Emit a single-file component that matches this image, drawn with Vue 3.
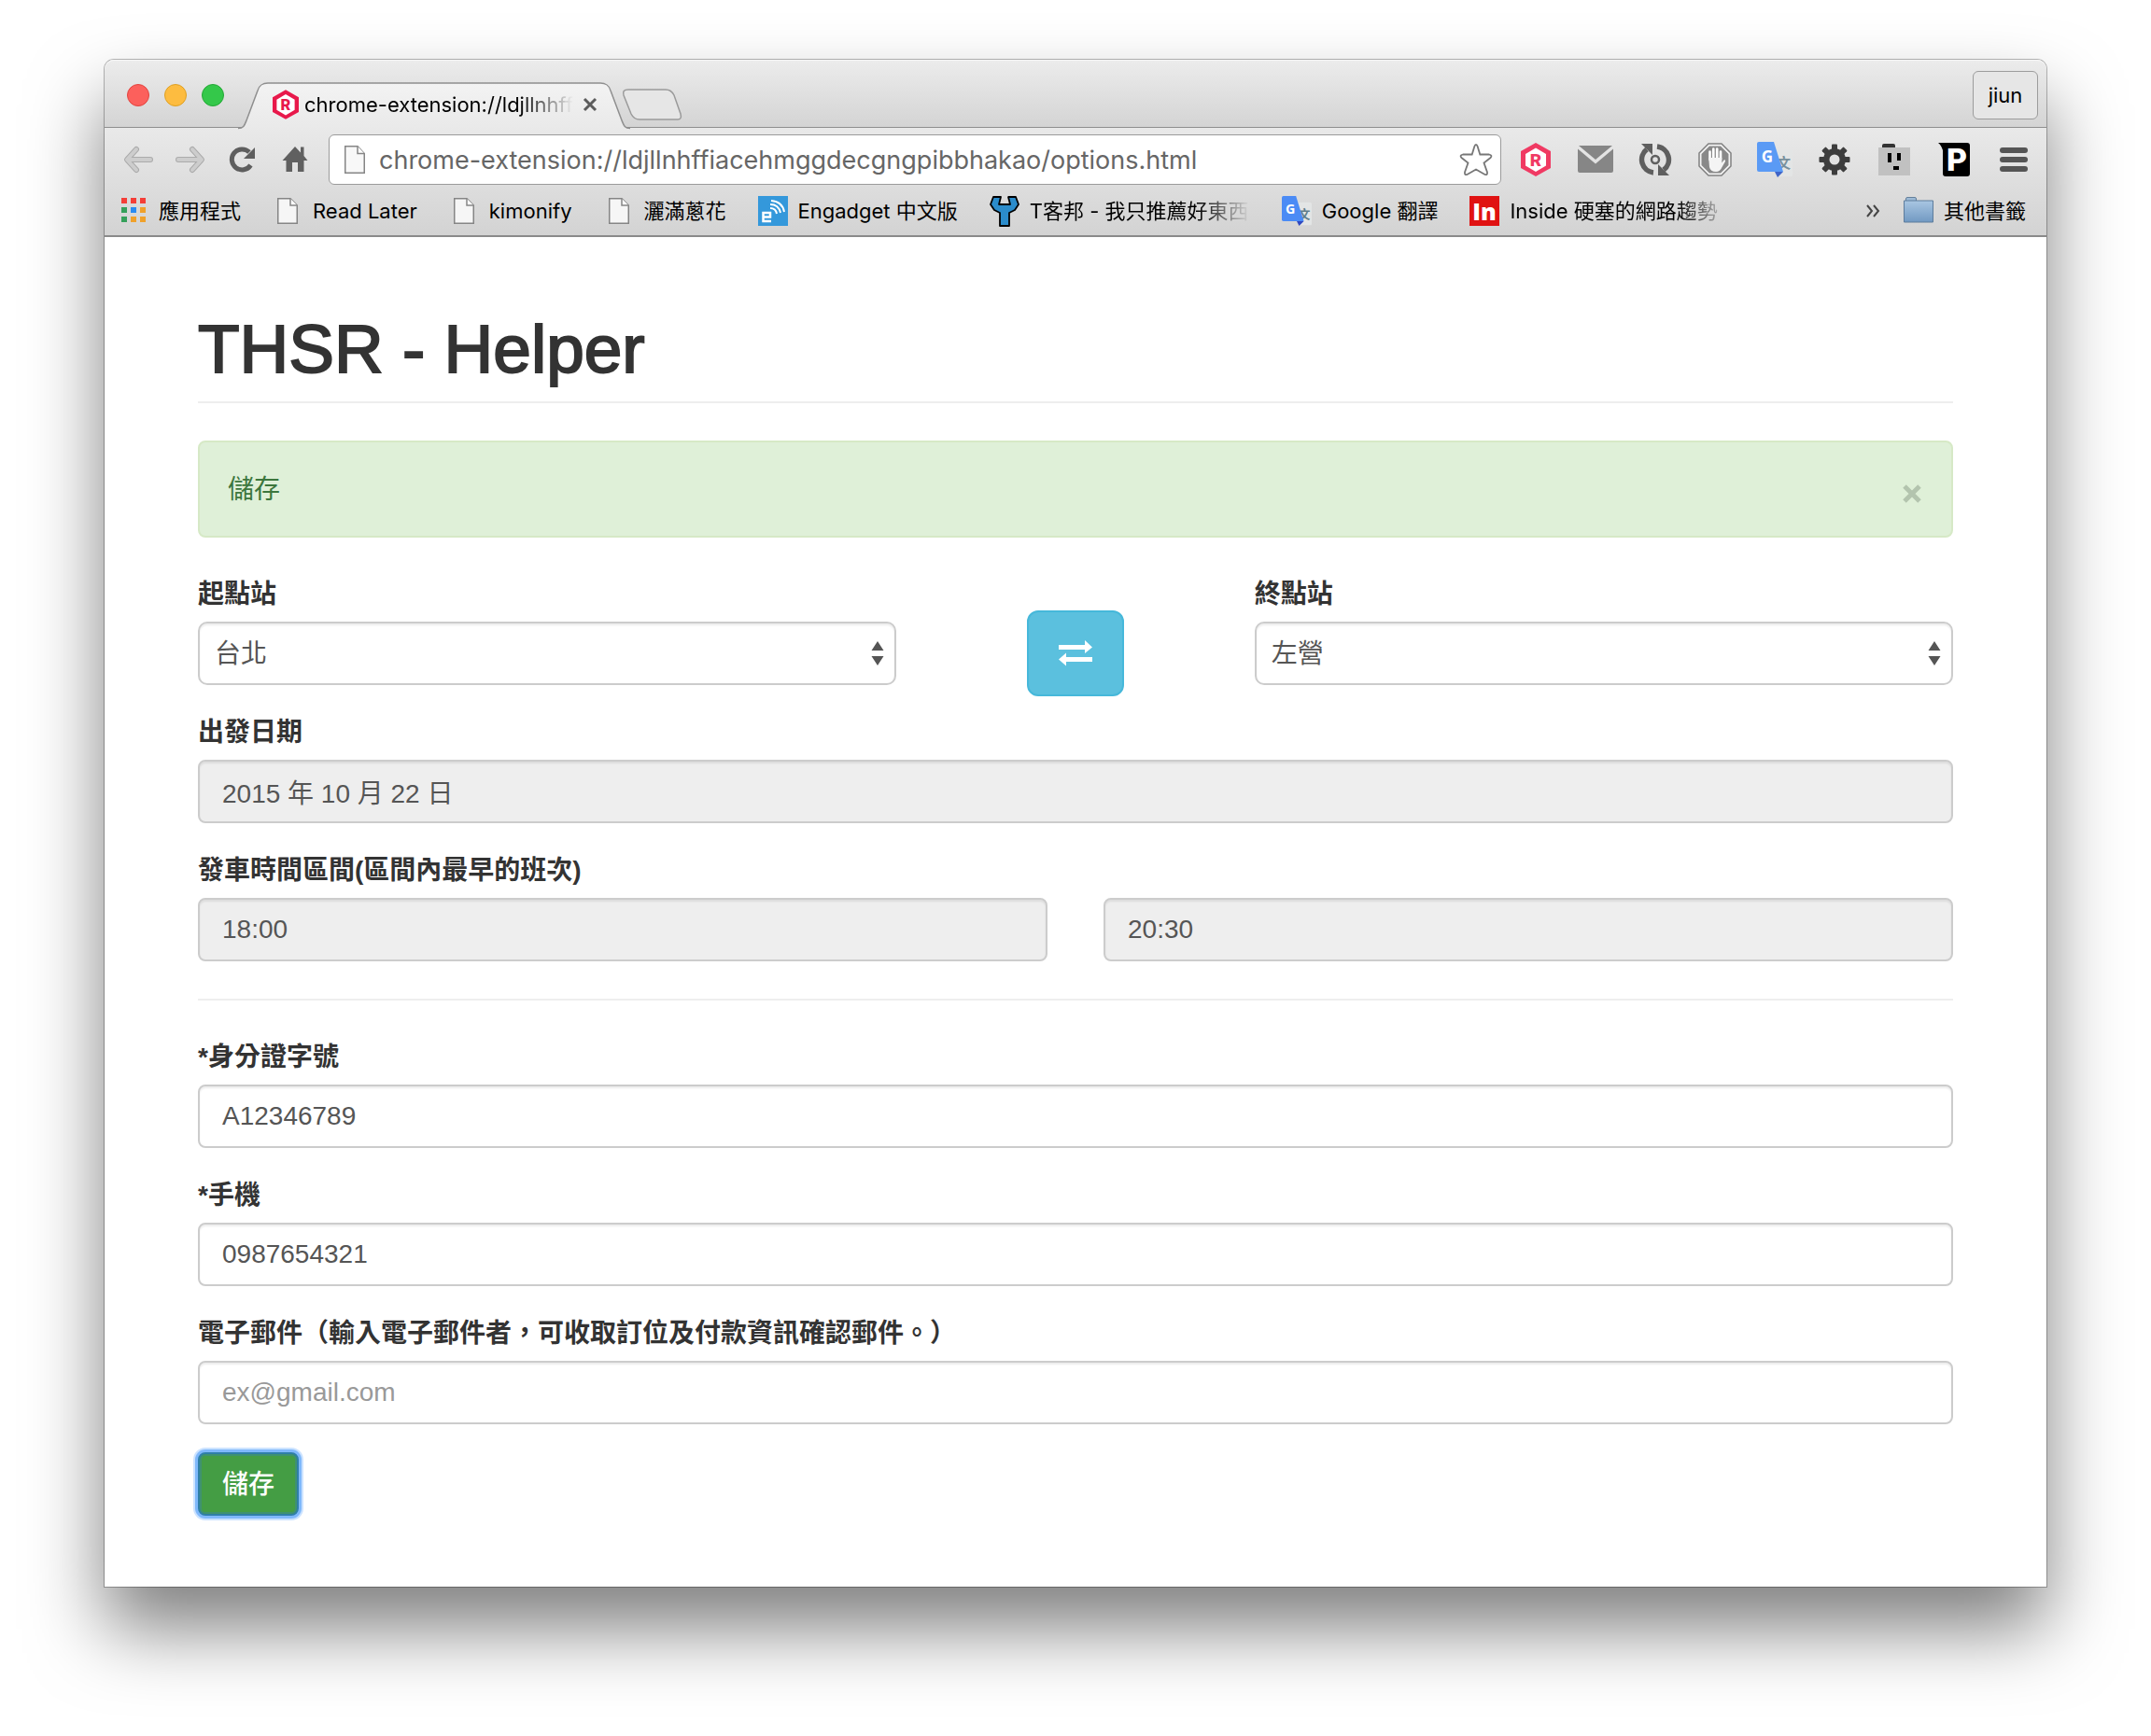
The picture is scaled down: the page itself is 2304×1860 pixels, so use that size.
<script setup>
import { ref } from 'vue'

const url = ref('chrome-extension://ldjllnhffiacehmggdecgngpibbhakao/options.html')
const origin = ref('台北')
const destination = ref('左營')
const date = ref('2015 年 10 月 22 日')
const timeFrom = ref('18:00')
const timeTo = ref('20:30')
const idNumber = ref('A12346789')
const phone = ref('0987654321')
const email = ref('')
const saved = ref(true)

const stations = ['台北', '板橋', '桃園', '新竹', '台中', '嘉義', '台南', '左營']

const bookmarks = [
  { label: 'Read Later', icon: 'page' },
  { label: 'kimonify', icon: 'page' },
  { label: '灑滿蔥花', icon: 'page' },
  { label: 'Engadget 中文版', icon: 'engadget' },
  { label: 'T客邦 - 我只推薦好東西', icon: 'techbang', clip: true },
  { label: 'Google 翻譯', icon: 'translate' },
  { label: 'Inside 硬塞的網路趨勢', icon: 'inside', clip: true },
]

function swap() {
  const from = origin.value
  origin.value = destination.value
  destination.value = from
}
</script>

<template>
  <div class="desktop">
    <div class="window">
      <header class="tabstrip">
        <div class="lights">
          <button class="light red" aria-label="Close"></button>
          <button class="light yellow" aria-label="Minimize"></button>
          <button class="light green" aria-label="Zoom"></button>
        </div>
        <div class="tab">
          <svg class="tab-shape" width="420" height="51" viewBox="0 0 420 51">
            <defs>
              <linearGradient id="tabFill" x1="0" y1="0" x2="0" y2="1">
                <stop offset="0" stop-color="#f3f3f3" />
                <stop offset="1" stop-color="#e9e9e9" />
              </linearGradient>
            </defs>
            <path d="M0 51V49.500C6 49.500 7 46 9 41L21 9C23 3 26 1 32 1H388C394 1 397 3 399 9L411 41C413 46 414 49.500 420 49.500V51Z" fill="url(#tabFill)" />
            <path d="M0 49.500C6 49.500 7 46 9 41L21 9C23 3 26 1 32 1H388C394 1 397 3 399 9L411 41C413 46 414 49.500 420 49.500" fill="none" stroke="#8f8f8f" stroke-width="1.500" />
          </svg>
          <svg class="favicon" width="28" height="32" viewBox="0 0 32 36">
            <path d="M16 0L32 9V27L16 36L0 27V9Z" fill="#e8194b" />
            <path d="M16 5.500L27 12V24.500L16 31L5 24.500V12Z" fill="#fff" />
            <text x="16" y="25" text-anchor="middle" font-family="Roboto, sans-serif" font-weight="900" font-size="19" fill="#e8194b">R</text>
          </svg>
          <span class="tab-title">chrome-extension://ldjllnhff</span>
          <button class="tab-close" aria-label="Close tab">
            <svg width="16" height="16" viewBox="0 0 16 16"><path d="M2 2L14 14M14 2L2 14" stroke="#5c5c5c" stroke-width="3" /></svg>
          </button>
        </div>
        <button class="new-tab" aria-label="New tab">
          <svg width="66" height="34" viewBox="0 0 66 34">
            <path d="M8 1H48C53 1 55 3 57 7L64 27C65 31 64 33 61 33H20C15 33 13 31 11 27L3 7C2 3 3 1 8 1Z" fill="#e6e6e6" stroke="#9a9a9a" stroke-width="1.500" />
          </svg>
        </button>
        <button class="profile">jiun</button>
      </header>

      <div class="chrome">
        <div class="toolbar">
          <button class="nav" aria-label="Back">
            <svg width="32" height="30" viewBox="0 0 32 30"><path d="M29 15H5M14 4L4 15L14 26" fill="none" stroke="#ababab" stroke-width="6" stroke-linecap="round" stroke-linejoin="round" /><path d="M29 15H5M14 4L4 15L14 26" fill="none" stroke="#cdcdcd" stroke-width="4" stroke-linecap="round" stroke-linejoin="round" /></svg>
          </button>
          <button class="nav" aria-label="Forward">
            <svg width="32" height="30" viewBox="0 0 32 30"><path d="M3 15H27M18 4L28 15L18 26" fill="none" stroke="#ababab" stroke-width="6" stroke-linecap="round" stroke-linejoin="round" /><path d="M3 15H27M18 4L28 15L18 26" fill="none" stroke="#cdcdcd" stroke-width="4" stroke-linecap="round" stroke-linejoin="round" /></svg>
          </button>
          <button class="nav" aria-label="Reload">
            <svg width="30" height="30" viewBox="0 0 30 30"><path d="M23.500 21A11 11 0 1 1 22 7" fill="none" stroke="#5e5e5e" stroke-width="5" /><path d="M28 2V14H16Z" fill="#5e5e5e" /></svg>
          </button>
          <button class="nav" aria-label="Home">
            <svg width="28" height="30" viewBox="0 0 28 30"><path d="M14 1L20 7.500V1.500H23.500V11L27.500 16H23.500V28H17V18H11V28H4.500V16H.5Z" fill="#606060" /></svg>
          </button>
          <div class="omnibox">
            <svg width="22" height="30" viewBox="0 0 22 30"><path d="M.75.75H14L21.250 8.500V29.250H.75Z" fill="#f8f8f8" stroke="#858585" stroke-width="1.500" /><path d="M14 .75V8.500H21.250" fill="#fff" stroke="#858585" stroke-width="1.500" /></svg>
            <input v-model="url" class="url" type="text" aria-label="Address" spellcheck="false" />
            <button class="star" aria-label="Bookmark this page">
              <svg width="36" height="36" viewBox="0 0 36 36"><path d="M18 2Q19 2 19.700 4L22.300 12.500H32Q36 13.500 33.500 16L26.500 21.500L30 31.500Q30.500 35 27.500 34L18 28.500L8.500 34Q5.500 35 6 31.500L9.500 21.500L2.500 16Q0 13.500 4 12.500H13.700L16.300 4Q17 2 18 2Z" fill="#fff" stroke="#777" stroke-width="1.800" /></svg>
            </button>
          </div>
          <div class="extensions">
            <button class="ext" aria-label="THSR Helper">
              <svg width="32" height="36" viewBox="0 0 32 36"><path d="M16 0L32 9V27L16 36L0 27V9Z" fill="#f03a63" /><path d="M16 5.500L27 12V24.500L16 31L5 24.500V12Z" fill="#fff" /><text x="16" y="25" text-anchor="middle" font-family="Roboto, sans-serif" font-weight="900" font-size="19" fill="#f03a63">R</text></svg>
            </button>
            <button class="ext" aria-label="Mail">
              <svg width="38" height="30" viewBox="0 0 38 30"><path d="M1 0H37L19 15Z" fill="#868686" /><path d="M0 3.500L19 19.500L38 3.500V27Q38 29 36 29H2Q0 29 0 27Z" fill="#868686" /></svg>
            </button>
            <button class="ext" aria-label="Sync">
              <svg width="36" height="36" viewBox="0 0 36 36"><path d="M9 7A14 14 0 0 0 16 32M27 29A14 14 0 0 0 20 4" fill="none" stroke="#5f5f5f" stroke-width="5.500" /><path d="M3 1H15V13Z" fill="#5f5f5f" /><path d="M33 35H21V23Z" fill="#5f5f5f" /><circle cx="18" cy="18" r="4" fill="none" stroke="#5f5f5f" stroke-width="2.500" /></svg>
            </button>
            <button class="ext" aria-label="Content blocker">
              <svg width="36" height="36" viewBox="0 0 36 36"><path d="M11 1H25L35 11V25L25 35H11L1 25V11Z" fill="#f4f4f4" stroke="#808080" stroke-width="1.500" /><path d="M12 3.500H24L32.500 12V24L24 32.500H12L3.500 24V12Z" fill="#898989" /><path d="M12.500 18V9.500M16.300 17V6.500M20.200 17V6.500M24 18V9.500" stroke="#fff" stroke-width="2.600" stroke-linecap="round" /><path d="M11.200 16H25.300V21.500L27.500 18.500Q29.500 17.500 29 20L25.500 26Q23.500 31 19 31Q13 31 12 26Z" fill="#f4f4f4" /></svg>
            </button>
            <button class="ext" aria-label="Translate">
              <svg width="38" height="38" viewBox="0 0 38 38"><path d="M16 8H36Q38 8 38 10V36Q38 37 36 37H22Z" fill="#e3e5e5" /><text x="21" y="28" font-family="Noto Sans CJK TC, sans-serif" font-weight="700" font-size="15" fill="#78909c">文</text><path d="M2 0H18L28 32H2Q0 32 0 30V2Q0 0 2 0Z" fill="#5a9af5" /><path d="M19 32H28L22 38Z" fill="#3f64c8" /><text x="11" y="22" text-anchor="middle" font-family="Open Sans, sans-serif" font-weight="700" font-size="17" fill="#fff">G</text></svg>
            </button>
            <button class="ext" aria-label="Settings">
              <svg width="34" height="34" viewBox="-17 -17 34 34"><g fill="#3d3d3d"><rect v-for="n in 4" :key="n" x="-3" y="-16.500" width="6" height="33" rx="1" :transform="`rotate(${n * 45})`" /><circle r="12" /></g><circle r="5.500" fill="#e2e2e2" /></svg>
            </button>
            <button class="ext" aria-label="Postbox">
              <svg width="34" height="34" viewBox="0 0 34 34"><path d="M4 4V2Q4 0 6 0H16Q18 0 18 2V4Z" fill="#333" /><path d="M0 4H34V34H0Z" fill="#c1c1c1" /><path d="M10 10H14V20H10ZM20 10H24V18H20ZM16 24H22V28H16Z" fill="#000" /></svg>
            </button>
            <button class="ext" aria-label="Pushbullet">
              <svg width="34" height="36" viewBox="0 0 34 36"><path d="M0 0H31Q34 0 34 3V33Q34 36 31 36H8Q5 36 5 33V8Q3 2 0 0Z" fill="#000" /><text x="20" y="30" text-anchor="middle" font-family="Roboto, sans-serif" font-weight="900" font-size="34" fill="#fff">P</text></svg>
            </button>
            <button class="ext" aria-label="Menu">
              <svg width="30" height="26" viewBox="0 0 30 26"><path d="M3 3H27M3 13H27M3 23H27" stroke="#555" stroke-width="6" stroke-linecap="round" /></svg>
            </button>
          </div>
        </div>

        <nav class="bookmarks">
          <a class="bookmark" href="#">
            <svg class="bm-icon" viewBox="0 0 32 32">
              <path d="M3 2H9V8H3ZM13 2H19V8H13ZM23 2H29V8H23Z" fill="#f43e37" />
              <path d="M3 12H9V18H3ZM3 22H9V28H3Z" fill="#35a05a" />
              <path d="M13 12H19V18H13Z" fill="#2a8bf2" />
              <path d="M23 12H29V18H23ZM13 22H19V28H13ZM23 22H29V28H23Z" fill="#f0a12a" />
            </svg>
            <span>應用程式</span>
          </a>
          <a v-for="b in bookmarks" :key="b.label" class="bookmark" href="#">
            <svg v-if="b.icon === 'page'" class="bm-icon" viewBox="0 0 32 32"><path d="M5.750 2.750H19L26.250 10V29.250H5.750Z" fill="#f6f6f6" stroke="#858585" stroke-width="1.500" /><path d="M19 2.750V10H26.250" fill="#fff" stroke="#858585" stroke-width="1.500" /></svg>
            <svg v-else-if="b.icon === 'engadget'" class="bm-icon" viewBox="0 0 32 32"><path d="M0 0H32V32H0Z" fill="#3498db" /><path d="M6 22.500H13V18H5.500V27H14" fill="none" stroke="#fff" stroke-width="2.500" /><path d="M13 13Q19 13 20 19M13 9Q22 9 24 18M14 5Q26 6 28 17" fill="none" stroke="#fff" stroke-width="2" /></svg>
            <svg v-else-if="b.icon === 'techbang'" class="bm-icon" viewBox="0 0 32 32"><path d="M4 1H12L10 9H22L20 1H28L31 9L27 15L21 18V32H11V18L5 15L1 9Z" fill="#2b8ccb" stroke="#000" stroke-width="1.800" stroke-linejoin="round" /></svg>
            <svg v-else-if="b.icon === 'translate'" class="bm-icon" viewBox="0 0 38 38"><path d="M16 8H36Q38 8 38 10V36Q38 37 36 37H22Z" fill="#e3e5e5" /><text x="21" y="28" font-family="Noto Sans CJK TC, sans-serif" font-weight="700" font-size="15" fill="#607d8b">文</text><path d="M2 0H18L28 32H2Q0 32 0 30V2Q0 0 2 0Z" fill="#4b8bf5" /><path d="M19 32H28L22 38Z" fill="#3048c0" /><text x="11" y="22" text-anchor="middle" font-family="Open Sans, sans-serif" font-weight="700" font-size="17" fill="#fff">G</text></svg>
            <svg v-else class="bm-icon" viewBox="0 0 32 32"><path d="M0 0H32V32H0Z" fill="#e01212" /><text x="16" y="26" text-anchor="middle" font-family="Open Sans, sans-serif" font-weight="800" font-size="25" fill="#fff">In</text></svg>
            <span :class="{ clip: b.clip }">{{ b.label }}</span>
          </a>
          <button class="overflow" aria-label="More bookmarks">
            <svg width="14" height="14" viewBox="0 0 14 14"><path d="M1 1L6 7L1 13M8 1L13 7L8 13" fill="none" stroke="#444" stroke-width="2" /></svg>
          </button>
          <a class="bookmark" href="#">
            <svg class="bm-icon" viewBox="0 0 32 32">
              <defs>
                <linearGradient id="folder" x1="0" y1="0" x2="0" y2="1">
                  <stop offset="0" stop-color="#a9c6e2" />
                  <stop offset="1" stop-color="#7199c2" />
                </linearGradient>
              </defs>
              <path d="M2.500 5V3Q2.500 1.500 4 1.500H12Q13.500 1.500 13.500 3V5" fill="#9dbad6" stroke="#65809b" />
              <path d="M.5 5H31.500V28H.5Z" fill="url(#folder)" stroke="#5d7c9c" />
            </svg>
            <span>其他書籤</span>
          </a>
        </nav>
      </div>

      <main class="page">
        <h1>THSR - Helper</h1>

        <div v-if="saved" class="alert" role="alert">
          <span>儲存</span>
          <button class="dismiss" aria-label="Close" @click="saved = false">
            <svg width="20" height="20" viewBox="0 0 20 20"><path d="M2 2L18 18M18 2L2 18" stroke="#b3c4ae" stroke-width="5" /></svg>
          </button>
        </div>

        <form @submit.prevent="saved = true">
          <div class="route">
            <div class="field">
              <label for="origin">起點站</label>
              <div class="select">
                <select id="origin" v-model="origin">
                  <option v-for="s in stations" :key="s">{{ s }}</option>
                </select>
                <svg class="arrows" width="14" height="26" viewBox="0 0 14 26"><path d="M7 0L13.500 10H.5ZM7 26L13.500 16H.5Z" fill="#555" /></svg>
              </div>
            </div>
            <button class="swap" type="button" aria-label="Swap stations" @click="swap">
              <svg width="36" height="28" viewBox="0 0 36 28"><path d="M0 5H28V0L36 7.500L28 14V10H0ZM36 18H8V13.500L0 20.500L8 27.500V23H36Z" fill="#fff" /></svg>
            </button>
            <div class="field">
              <label for="destination">終點站</label>
              <div class="select">
                <select id="destination" v-model="destination">
                  <option v-for="s in stations" :key="s">{{ s }}</option>
                </select>
                <svg class="arrows" width="14" height="26" viewBox="0 0 14 26"><path d="M7 0L13.500 10H.5ZM7 26L13.500 16H.5Z" fill="#555" /></svg>
              </div>
            </div>
          </div>

          <div class="field">
            <label for="date">出發日期</label>
            <input id="date" v-model="date" type="text" readonly />
          </div>

          <div class="field">
            <label for="from">發車時間區間(區間內最早的班次)</label>
            <div class="times">
              <input id="from" v-model="timeFrom" type="text" readonly />
              <input v-model="timeTo" type="text" aria-label="最晚發車時間" readonly />
            </div>
          </div>

          <hr />

          <div class="field">
            <label for="id-number">*身分證字號</label>
            <input id="id-number" v-model="idNumber" type="text" />
          </div>
          <div class="field">
            <label for="phone">*手機</label>
            <input id="phone" v-model="phone" type="text" />
          </div>
          <div class="field">
            <label for="email">電子郵件（輸入電子郵件者，可收取訂位及付款資訊確認郵件。）</label>
            <input id="email" v-model="email" type="email" placeholder="ex@gmail.com" />
          </div>

          <button class="save" type="submit">儲存</button>
        </form>
      </main>
    </div>
  </div>
</template>

<style>
body {
  margin: 0;
  background: #fff;
}
</style>

<style scoped>
* {
  box-sizing: border-box;
}

button {
  padding: 0;
  border: 0;
  background: none;
  color: inherit;
  font: inherit;
}

svg {
  display: block;
  flex: none;
  overflow: visible;
}

.desktop {
  padding: 64px 112px 160px;
  overflow: hidden;
}

.window {
  border-radius: 10px 10px 0 0;
  background: #fff;
  box-shadow: 0 0 0 1px rgba(0, 0, 0, 0.28), 0 45px 80px rgba(0, 0, 0, 0.5);
  font-family: Inter, "Noto Sans CJK TC", sans-serif;
  font-size: 22px;
  color: #000;
}

/* Tab strip */
.tabstrip {
  display: flex;
  align-items: flex-end;
  height: 73px;
  padding: 4px 9px 0 24px;
  border-bottom: 1px solid #8f8f8f;
  border-radius: 10px 10px 0 0;
  background: linear-gradient(#ececec, #d4d4d4);
  box-shadow: inset 0 1px 0 #f7f7f7;
}

.lights {
  display: flex;
  gap: 16px;
  align-self: center;
  margin-right: 15px;
}

.light {
  width: 24px;
  height: 24px;
  border: 1px solid;
  border-radius: 50%;
}

.red {
  border-color: #e2443f;
  background: #fc605c;
}

.yellow {
  border-color: #dfa023;
  background: #fdbc40;
}

.green {
  border-color: #24a836;
  background: #34c84a;
}

.tab {
  position: relative;
  display: flex;
  align-items: center;
  width: 420px;
  height: 50px;
  margin-bottom: -2px;
  padding: 0 0 2px 37px;
}

.tab-shape {
  position: absolute;
  top: 0;
  left: 0;
}

.favicon,
.tab-title,
.tab-close {
  position: relative;
}

.tab-title {
  width: 288px;
  margin-left: 6px;
  overflow: hidden;
  white-space: nowrap;
  mask-image: linear-gradient(90deg, #000 80%, transparent);
}

.tab-close {
  margin-left: 10px;
}

.new-tab {
  margin: 0 auto 7px -10px;
}

.profile {
  align-self: center;
  width: 70px;
  height: 52px;
  border: 1px solid #9c9c9c;
  border-radius: 6px;
  background: #e6e6e6;
}

/* Toolbar and bookmarks */
.chrome {
  border-bottom: 2px solid #8a8a8a;
  background: linear-gradient(#e9e9e9, #d3d3d3);
}

.toolbar {
  display: flex;
  align-items: center;
  height: 63px;
  padding: 6px 3px 2px 8px;
}

.nav,
.ext {
  display: flex;
  align-items: center;
  justify-content: center;
  height: 54px;
}

.nav {
  width: 56px;
}

.ext {
  width: 64px;
}

.omnibox {
  display: flex;
  flex: 1;
  align-items: center;
  height: 54px;
  margin: 0 5px 0 8px;
  padding: 0 8px 0 16px;
  border: 1px solid #9b9b9b;
  border-radius: 6px;
  background: #fff;
}

.url {
  flex: 1;
  min-width: 0;
  height: 48px;
  padding: 2px 0 0;
  margin-left: 15px;
  border: 0;
  outline: 0;
  background: none;
  color: #666;
  font: inherit;
  font-size: 27px;
}

.extensions {
  display: flex;
}

.bookmarks {
  display: flex;
  align-items: center;
  gap: 34px;
  height: 52px;
  padding: 0 22px 0 15px;
}

.bookmark {
  display: flex;
  align-items: center;
  gap: 11px;
  color: inherit;
  line-height: 28px;
  text-decoration: none;
  white-space: nowrap;
}

.bm-icon {
  width: 32px;
  height: 32px;
}

.clip {
  width: 236px;
  overflow: hidden;
  mask-image: linear-gradient(90deg, #000 76%, transparent);
}

.overflow {
  margin: 0 -8px 0 auto;
}

/* Options page */
.page {
  padding: 80px 100px 76px;
  font-family: "Liberation Sans", "Noto Sans CJK TC", sans-serif;
  font-size: 28px;
  line-height: 40px;
  color: #333;
}

h1 {
  margin: 0 0 40px;
  padding-bottom: 16px;
  border-bottom: 2px solid #eee;
  font-size: 73px;
  font-weight: 400;
  line-height: 80px;
  -webkit-text-stroke: 2px #333;
}

.alert {
  display: flex;
  align-items: center;
  justify-content: space-between;
  height: 104px;
  margin-bottom: 40px;
  padding: 2px 32px 0 30px;
  border: 2px solid #d6e9c6;
  border-radius: 8px;
  background: #dff0d8;
  color: #3c763d;
}

.dismiss {
  padding-top: 8px;
}

.field {
  display: flex;
  flex-direction: column;
  gap: 8px;
  margin-bottom: 30px;
}

label {
  font-weight: 700;
  line-height: 42px;
}

.field input,
select {
  width: 100%;
  height: 68px;
  padding: 0 24px;
  border: 2px solid #ccc;
  border-radius: 8px;
  background: #fff;
  box-shadow: inset 0 2px 2px rgba(0, 0, 0, 0.075);
  color: #555;
  font: inherit;
}

.field input:read-only {
  background: #eee;
}

.field input::placeholder {
  color: #999;
  opacity: 1;
}

.select {
  position: relative;
}

select {
  padding: 2px 48px 0 16px;
  border-radius: 10px;
  appearance: none;
}

.arrows {
  position: absolute;
  top: 21px;
  right: 13px;
  pointer-events: none;
}

.route {
  display: flex;
  align-items: flex-start;
  justify-content: space-between;
}

.route .field {
  width: calc((100% + 60px) * 5 / 12 - 60px);
}

.swap {
  display: flex;
  align-items: center;
  justify-content: center;
  width: 104px;
  height: 92px;
  margin: 38px 0 -12px;
  border: 2px solid #46b8da;
  border-radius: 12px;
  background: #5bc0de;
}

.times {
  display: grid;
  grid-template-columns: 1fr 1fr;
  gap: 60px;
}

hr {
  margin: 40px 0;
  border: 0;
  border-top: 2px solid #eee;
}

.save {
  display: block;
  height: 68px;
  padding: 2px 24px 0;
  border: 2px solid #2f7fa6;
  border-radius: 8px;
  background: #449d44;
  box-shadow: 0 0 0 3px #7fb8fb, 0 0 0 5px #cce3ff, inset 0 0 0 2px #3f9270;
  color: #fff;
  font-weight: 500;
}
</style>
